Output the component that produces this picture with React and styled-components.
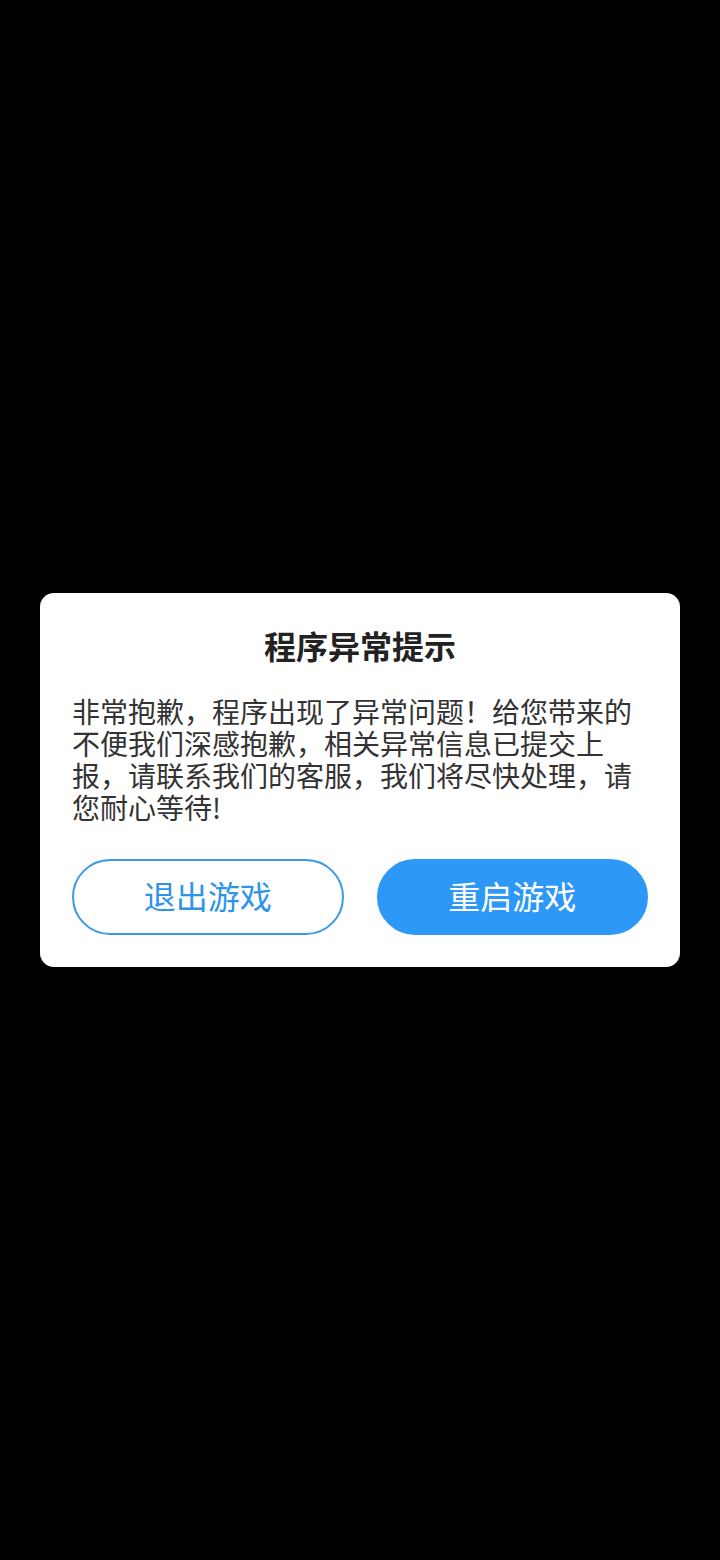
import React from "react";
import styled, { createGlobalStyle } from "styled-components";

const GlobalStyle = createGlobalStyle`
  html, body {
    margin: 0;
    padding: 0;
    background: #000;
  }
  body {
    font-family: "Noto Sans CJK SC", "Noto Sans", sans-serif;
  }
`;

const Screen = styled.div`
  width: 720px;
  height: 1560px;
  background: #000;
  display: flex;
  align-items: center;
  justify-content: center;
`;

const Dialog = styled.div`
  width: 640px;
  box-sizing: border-box;
  background: #fff;
  border-radius: 14px;
  padding: 32px 32px 32px;
  display: flex;
  flex-direction: column;
`;

const Title = styled.h2`
  margin: 0;
  font-size: 32px;
  line-height: 40px;
  font-weight: 700;
  color: #222;
  text-align: center;
`;

const Message = styled.p`
  margin: 30px 0 0;
  font-size: 28px;
  line-height: 32px;
  color: #333;
`;

const Actions = styled.div`
  margin-top: 36px;
  display: flex;
  gap: 33px;
`;

const Button = styled.button`
  flex: 1;
  height: 76px;
  padding: 0 0 4px;
  border-radius: 38px;
  box-sizing: border-box;
  font-family: inherit;
  font-size: 32px;
  cursor: pointer;
  border: 2px solid ${(p) => (p.$primary ? "#2d98f8" : "#3a9be4")};
  background: ${(p) => (p.$primary ? "#2d98f8" : "#fff")};
  color: ${(p) => (p.$primary ? "#fff" : "#2d94ec")};
`;

const App = () => {
  return (
    <>
      <GlobalStyle />
      <Screen>
        <Dialog>
          <Title>程序异常提示</Title>
          <Message>
            非常抱歉，程序出现了异常问题！给您带来的不便我们深感抱歉，相关异常信息已提交上报，请联系我们的客服，我们将尽快处理，请您耐心等待!
          </Message>
          <Actions>
            <Button>退出游戏</Button>
            <Button $primary>重启游戏</Button>
          </Actions>
        </Dialog>
      </Screen>
    </>
  );
};

export default App;
